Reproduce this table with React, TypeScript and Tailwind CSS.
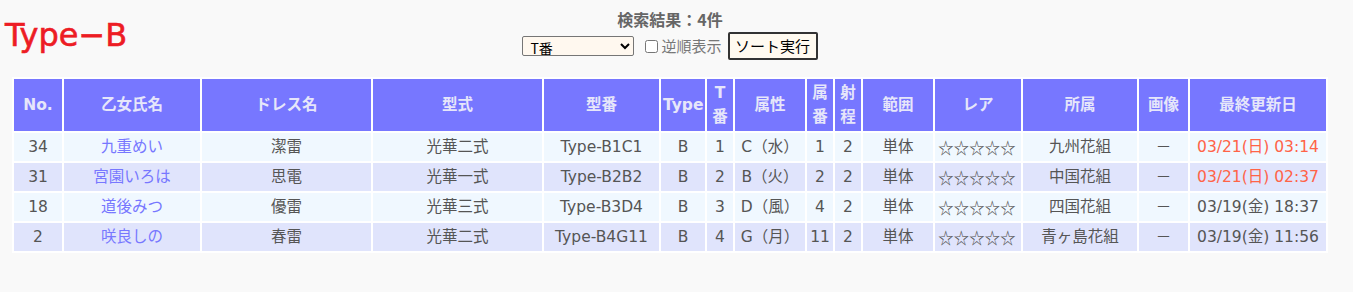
const cols = [48, 136, 169, 169, 115, 44, 26, 70, 26, 26, 70, 86, 114, 49, 136];

const heads = ["No.", "乙女氏名", "ドレス名", "型式", "型番", "Type", "T番", "属性", "属番", "射程", "範囲", "レア", "所属", "画像", "最終更新日"];

type Row = {
  no: string;
  name: string;
  dress: string;
  model: string;
  code: string;
  type: string;
  t: string;
  attr: string;
  zoku: string;
  range: string;
  area: string;
  rare: string;
  team: string;
  img: string;
  date: string;
  fresh: boolean;
};

const rows: Row[] = [
  { no: "34", name: "九重めい", dress: "潔雷", model: "光華二式", code: "Type-B1C1", type: "B", t: "1", attr: "C（水）", zoku: "1", range: "2", area: "単体", rare: "☆☆☆☆☆", team: "九州花組", img: "－", date: "03/21(日) 03:14", fresh: true },
  { no: "31", name: "宮園いろは", dress: "思電", model: "光華一式", code: "Type-B2B2", type: "B", t: "2", attr: "B（火）", zoku: "2", range: "2", area: "単体", rare: "☆☆☆☆☆", team: "中国花組", img: "－", date: "03/21(日) 02:37", fresh: true },
  { no: "18", name: "道後みつ", dress: "優雷", model: "光華三式", code: "Type-B3D4", type: "B", t: "3", attr: "D（風）", zoku: "4", range: "2", area: "単体", rare: "☆☆☆☆☆", team: "四国花組", img: "－", date: "03/19(金) 18:37", fresh: false },
  { no: "2", name: "咲良しの", dress: "春雷", model: "光華二式", code: "Type-B4G11", type: "B", t: "4", attr: "G（月）", zoku: "11", range: "2", area: "単体", rare: "☆☆☆☆☆", team: "青ヶ島花組", img: "－", date: "03/19(金) 11:56", fresh: false },
];

function Cell({ children, className = "" }: { children: React.ReactNode; className?: string }) {
  return <td className={`h-[28px] px-[2px] py-0 text-center align-middle leading-6 ${className}`}>{children}</td>;
}

export default function App() {
  return (
    <div className="min-h-screen bg-[#f9f9f9] font-['DejaVu_Sans','Noto_Sans_CJK_JP',sans-serif] text-[15.5px] text-[#555]">
      <div className="ml-[12px] w-[1316px]">
        <div className="grid grid-cols-[1fr_auto_1fr] items-start">
          <h1 className="-ml-[7px] mt-[15px] text-[32px] leading-[40px] text-[#ed1c24] [-webkit-text-stroke:0.6px_#ed1c24]">Type−B</h1>
          <div className="flex flex-col items-center">
            <div className="mt-[7px] text-[16px] font-bold leading-6 text-[#666] font-['Noto_Sans_CJK_JP',sans-serif]">検索結果：4件</div>
            <div className="mt-[1px] flex h-7 items-center">
              <select className="h-5 w-[112px] rounded-[2px] border border-[#767676] bg-[#fff8ef] pl-[3px] text-[14px] leading-4 text-black font-['Noto_Sans_CJK_JP',sans-serif]">
                <option>T番</option>
              </select>
              <input type="checkbox" className="ml-[11px] h-[13px] w-[13px]" />
              <span className="ml-[3px] text-[15px] text-[#777] font-['Noto_Sans_CJK_JP',sans-serif]">逆順表示</span>
              <button className="ml-[6px] h-7 w-[90px] rounded-[2px] border-2 border-[#333] bg-[#fffaf0] text-[15px] text-black font-['Noto_Sans_CJK_JP',sans-serif]">
                ソート実行
              </button>
            </div>
          </div>
          <div />
        </div>

        <table className="mt-[17px] w-[1316px] table-fixed border-separate border-spacing-[2px] bg-white">
          <colgroup>
            {cols.map((w, i) => (
              <col key={i} style={{ width: w }} />
            ))}
          </colgroup>
          <thead>
            <tr>
              {heads.map((h) => (
                <th key={h} className="h-[52px] bg-[#7777ff] px-[2px] py-0 text-center align-middle font-bold leading-6 text-[#e6e6fa]">
                  {h}
                </th>
              ))}
            </tr>
          </thead>
          <tbody>
            {rows.map((r, i) => (
              <tr key={r.no} className={i % 2 === 0 ? "bg-[#f0f8ff]" : "bg-[#e0e4fc]"}>
                <Cell>{r.no}</Cell>
                <Cell className="text-[#7777ff]">{r.name}</Cell>
                <Cell>{r.dress}</Cell>
                <Cell>{r.model}</Cell>
                <Cell>{r.code}</Cell>
                <Cell>{r.type}</Cell>
                <Cell>{r.t}</Cell>
                <Cell>{r.attr}</Cell>
                <Cell>{r.zoku}</Cell>
                <Cell>{r.range}</Cell>
                <Cell>{r.area}</Cell>
                <Cell className="font-['Noto_Sans_CJK_JP',sans-serif] text-[15.5px] text-left pl-[3px]">{r.rare}</Cell>
                <Cell>{r.team}</Cell>
                <Cell>{r.img}</Cell>
                <Cell className={r.fresh ? "text-[#ff6347]" : ""}>{r.date}</Cell>
              </tr>
            ))}
          </tbody>
        </table>
      </div>
    </div>
  );
}
